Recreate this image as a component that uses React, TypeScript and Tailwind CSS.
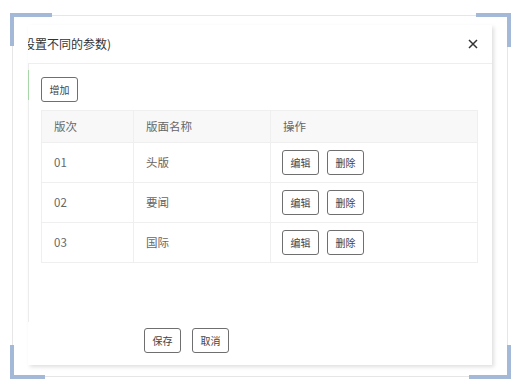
import React from 'react';

const font = { fontFamily: '"Noto Sans CJK SC", "Noto Sans", sans-serif' };

const rows = [
  { no: '01', name: '头版' },
  { no: '02', name: '要闻' },
  { no: '03', name: '国际' },
];

const Btn = ({ label }: { label: string }) => (
  <button className="w-[37px] h-[25px] border border-[#6f6f6f] rounded-[3px] bg-white text-[10px] text-[#444] leading-none flex items-center justify-center">
    {label}
  </button>
);

const Corners = () => (
  <>
    <div className="absolute left-[10px] top-[13px] w-[42px] h-[33px] border-t-4 border-l-4 border-[#a4b9d7]" />
    <div className="absolute left-[476px] top-[13px] w-[35px] h-[34px] border-t-4 border-r-4 border-[#a4b9d7]" />
    <div className="absolute left-[10px] top-[345px] w-[35px] h-[34px] border-b-4 border-l-4 border-[#a4b9d7]" />
    <div className="absolute left-[469px] top-[345px] w-[42px] h-[34px] border-b-4 border-r-4 border-[#a4b9d7]" />
  </>
);

export default function App() {
  return (
    <div className="w-[520px] h-[392px] bg-white relative overflow-hidden pt-[15px] pl-[12px]" style={font}>
      <div className="w-[496px] h-[362px] border border-[#e6e6e6] pl-[15px] pt-[9px]">
        {/* dialog */}
        <div className="w-[464px] h-[340px] bg-white flex flex-col overflow-hidden shadow-[2px_2px_4px_rgba(0,0,0,0.13)]">
          <div className="h-[39px] shrink-0 border-b border-[#eeeeee] flex items-center justify-between pr-[14px]">
            <span className="-ml-[5px] text-[12px] text-[#333]">设置不同的参数)</span>
            <svg width="10" height="10" viewBox="0 0 10 10">
              <path d="M1 1 L9 9 M9 1 L1 9" stroke="#333" strokeWidth="1.5" />
            </svg>
          </div>

          <div className="relative h-[258px] shrink-0 border-l border-[#ececec] pl-[12px] pt-[13px]">
            <div className="absolute -left-[1px] top-[6px] w-[1px] h-[30px] bg-[#a9d6a9]" />
            <button className="w-[37px] h-[25px] border border-[#6f6f6f] rounded-[3px] bg-white text-[10px] text-[#444] leading-none flex items-center justify-center">
              增加
            </button>

            <table className="mt-[8px] w-[437px] border-collapse text-[11.5px] text-[#666]">
              <thead>
                <tr className="h-[32px] bg-[#f8f8f8]">
                  <th className="w-[92px] border border-[#efefef] text-left font-normal pl-[12px]">版次</th>
                  <th className="w-[137px] border border-[#efefef] text-left font-normal pl-[12px]">版面名称</th>
                  <th className="border border-[#efefef] text-left font-normal pl-[12px]">操作</th>
                </tr>
              </thead>
              <tbody>
                {rows.map((r) => (
                  <tr key={r.no} className="h-[40px]">
                    <td className="border border-[#efefef] pl-[12px]">{r.no}</td>
                    <td className="border border-[#efefef] pl-[12px]">{r.name}</td>
                    <td className="border border-[#efefef] pl-[11px]">
                      <div className="flex gap-[8px]">
                        <Btn label="编辑" />
                        <Btn label="删除" />
                      </div>
                    </td>
                  </tr>
                ))}
              </tbody>
            </table>
          </div>

          <div className="flex gap-[11px] pl-[116px] pt-[6px]">
            <Btn label="保存" />
            <Btn label="取消" />
          </div>
        </div>
      </div>
      <Corners />
    </div>
  );
}
